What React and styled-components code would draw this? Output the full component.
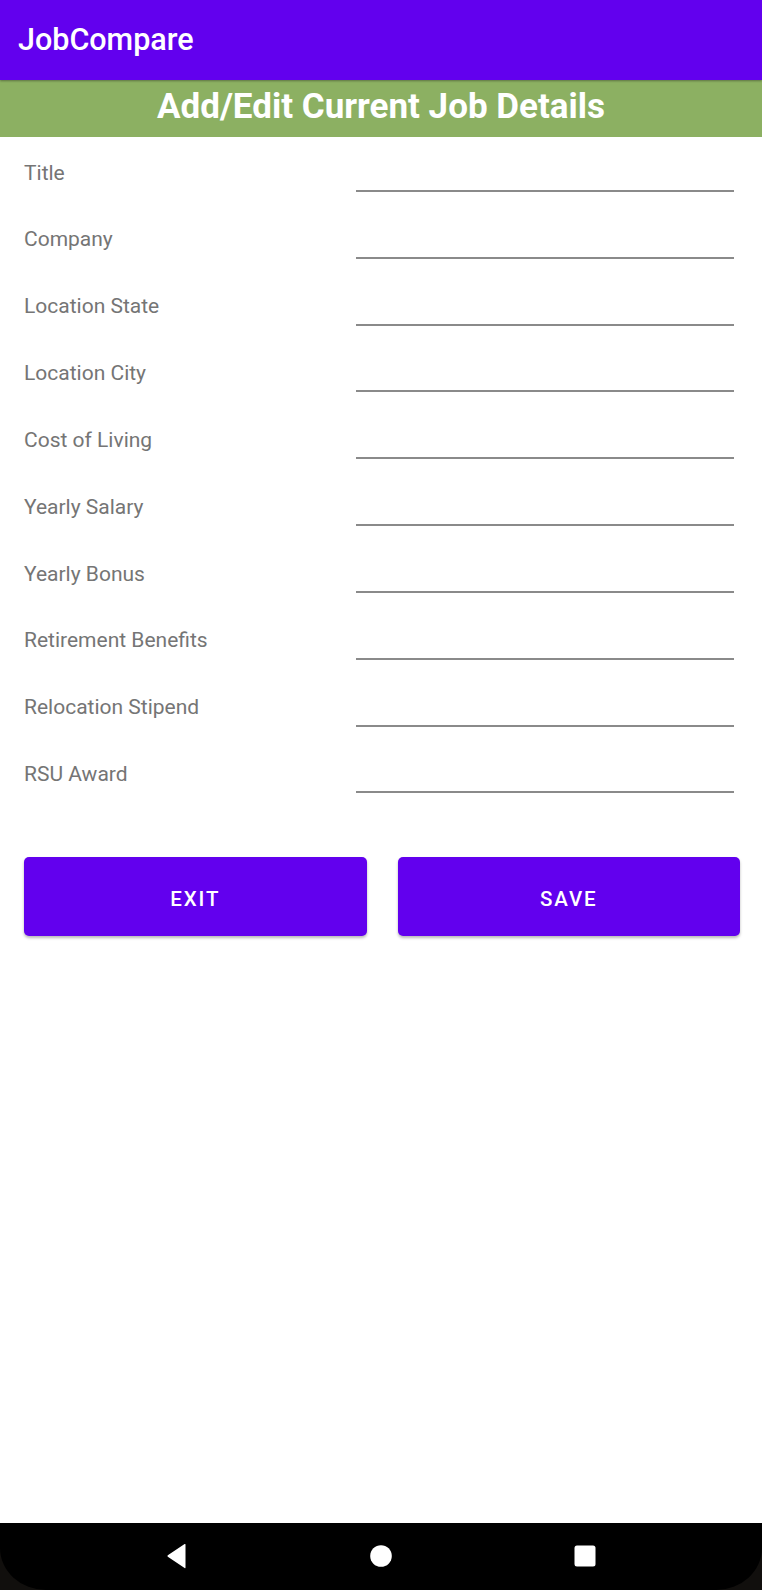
import styled, { createGlobalStyle } from 'styled-components';

const GlobalStyle = createGlobalStyle`
html, body {
    margin: 0;
    padding: 0;
    background: #ffffff;
}
body {
    font-family: Roboto, "Noto Sans", "Liberation Sans", sans-serif;
}
`

const fields = [
    'Title',
    'Company',
    'Location State',
    'Location City',
    'Cost of Living',
    'Yearly Salary',
    'Yearly Bonus',
    'Retirement Benefits',
    'Relocation Stipend',
    'RSU Award',
];

function BackIcon() {
    return (
        <svg width="22" height="26" viewBox="0 0 22 26">
            <path d="M19.5 1.5 L19.5 24.5 Q19.5 25.5 18.6 24.9 L1.8 13.8 Q1 13 1.8 12.2 L18.6 1.1 Q19.5 0.5 19.5 1.5 Z" fill="#ffffff" />
        </svg>
    );
}

function HomeIcon() {
    return (
        <svg width="22" height="22" viewBox="0 0 22 22">
            <circle cx="11" cy="11" r="10.8" fill="#ffffff" />
        </svg>
    );
}

function RecentsIcon() {
    return (
        <svg width="22" height="22" viewBox="0 0 22 22">
            <rect x="0.5" y="0.5" width="21" height="21" rx="2.5" fill="#ffffff" />
        </svg>
    );
}

function App() {
    return (
        <Screen>
            <GlobalStyle />
            <AppBar>
                <AppTitle>JobCompare</AppTitle>
            </AppBar>
            <Banner>Add/Edit Current Job Details</Banner>

            <Content>
                <Form>
                    {fields.map((name) => (
                        <Row key={name}>
                            <Label>{name}</Label>
                            <Field />
                        </Row>
                    ))}
                </Form>

                <Buttons>
                    <Button>Exit</Button>
                    <Button>Save</Button>
                </Buttons>
            </Content>

            <NavFrame>
                <NavBar>
                    <NavItem><BackIcon /></NavItem>
                    <NavItem><HomeIcon /></NavItem>
                    <NavItem><RecentsIcon /></NavItem>
                </NavBar>
            </NavFrame>
        </Screen>
    );
}

export default App;

const Screen = styled.div`
display: flex;
flex-direction: column;
width: 762px;
height: 1590px;
overflow: hidden;
background: #ffffff;
`

const AppBar = styled.div`
position: relative;
z-index: 1;
display: flex;
align-items: center;
height: 80px;
padding-left: 18px;
background: #6200ee;
box-shadow: 0 1px 2px rgba(0, 0, 0, 0.35);
`

const AppTitle = styled.div`
color: #ffffff;
font-size: 30.5px;
font-weight: 500;
line-height: 1.172;
`

const Banner = styled.div`
display: flex;
align-items: center;
justify-content: center;
height: 57px;
padding-bottom: 3px;
box-sizing: border-box;
background: #8cb062;
color: #ffffff;
font-size: 35px;
font-weight: 700;
line-height: 1.172;
`

const Content = styled.div`
flex: 1;
`

const Form = styled.div`
display: flex;
flex-direction: column;
`

const Row = styled.div`
display: grid;
grid-template-columns: 332px 378px;
height: 66.85px;
padding-left: 24px;
`

const Label = styled.div`
align-self: start;
padding-top: 23.5px;
color: #757575;
font-size: 21px;
line-height: 1.172;
`

const Field = styled.div`
align-self: end;
height: 30px;
margin-bottom: 12px;
border-bottom: 2px solid #8a8a8a;
`

const Buttons = styled.div`
display: grid;
grid-template-columns: 1fr 1fr;
gap: 31px;
margin-top: 52px;
padding: 0 22px 0 24px;
`

const Button = styled.button`
height: 79px;
padding: 4px 0 0;
border: none;
border-radius: 5px;
background: #6200ee;
box-shadow: 0 2px 3px rgba(0, 0, 0, 0.28);
color: #ffffff;
font-family: Roboto, "Noto Sans", "Liberation Sans", sans-serif;
font-size: 20.5px;
font-weight: 500;
letter-spacing: 1.9px;
text-transform: uppercase;
`

const NavFrame = styled.div`
height: 67px;
background: #110f0d;
`

const NavBar = styled.div`
display: flex;
align-items: center;
justify-content: center;
gap: 164px;
height: 100%;
padding-bottom: 2px;
box-sizing: border-box;
background: #000000;
border-radius: 0 0 46px 46px / 0 0 42px 42px;
`

const NavItem = styled.div`
display: flex;
align-items: center;
justify-content: center;
width: 40px;
height: 40px;
`
